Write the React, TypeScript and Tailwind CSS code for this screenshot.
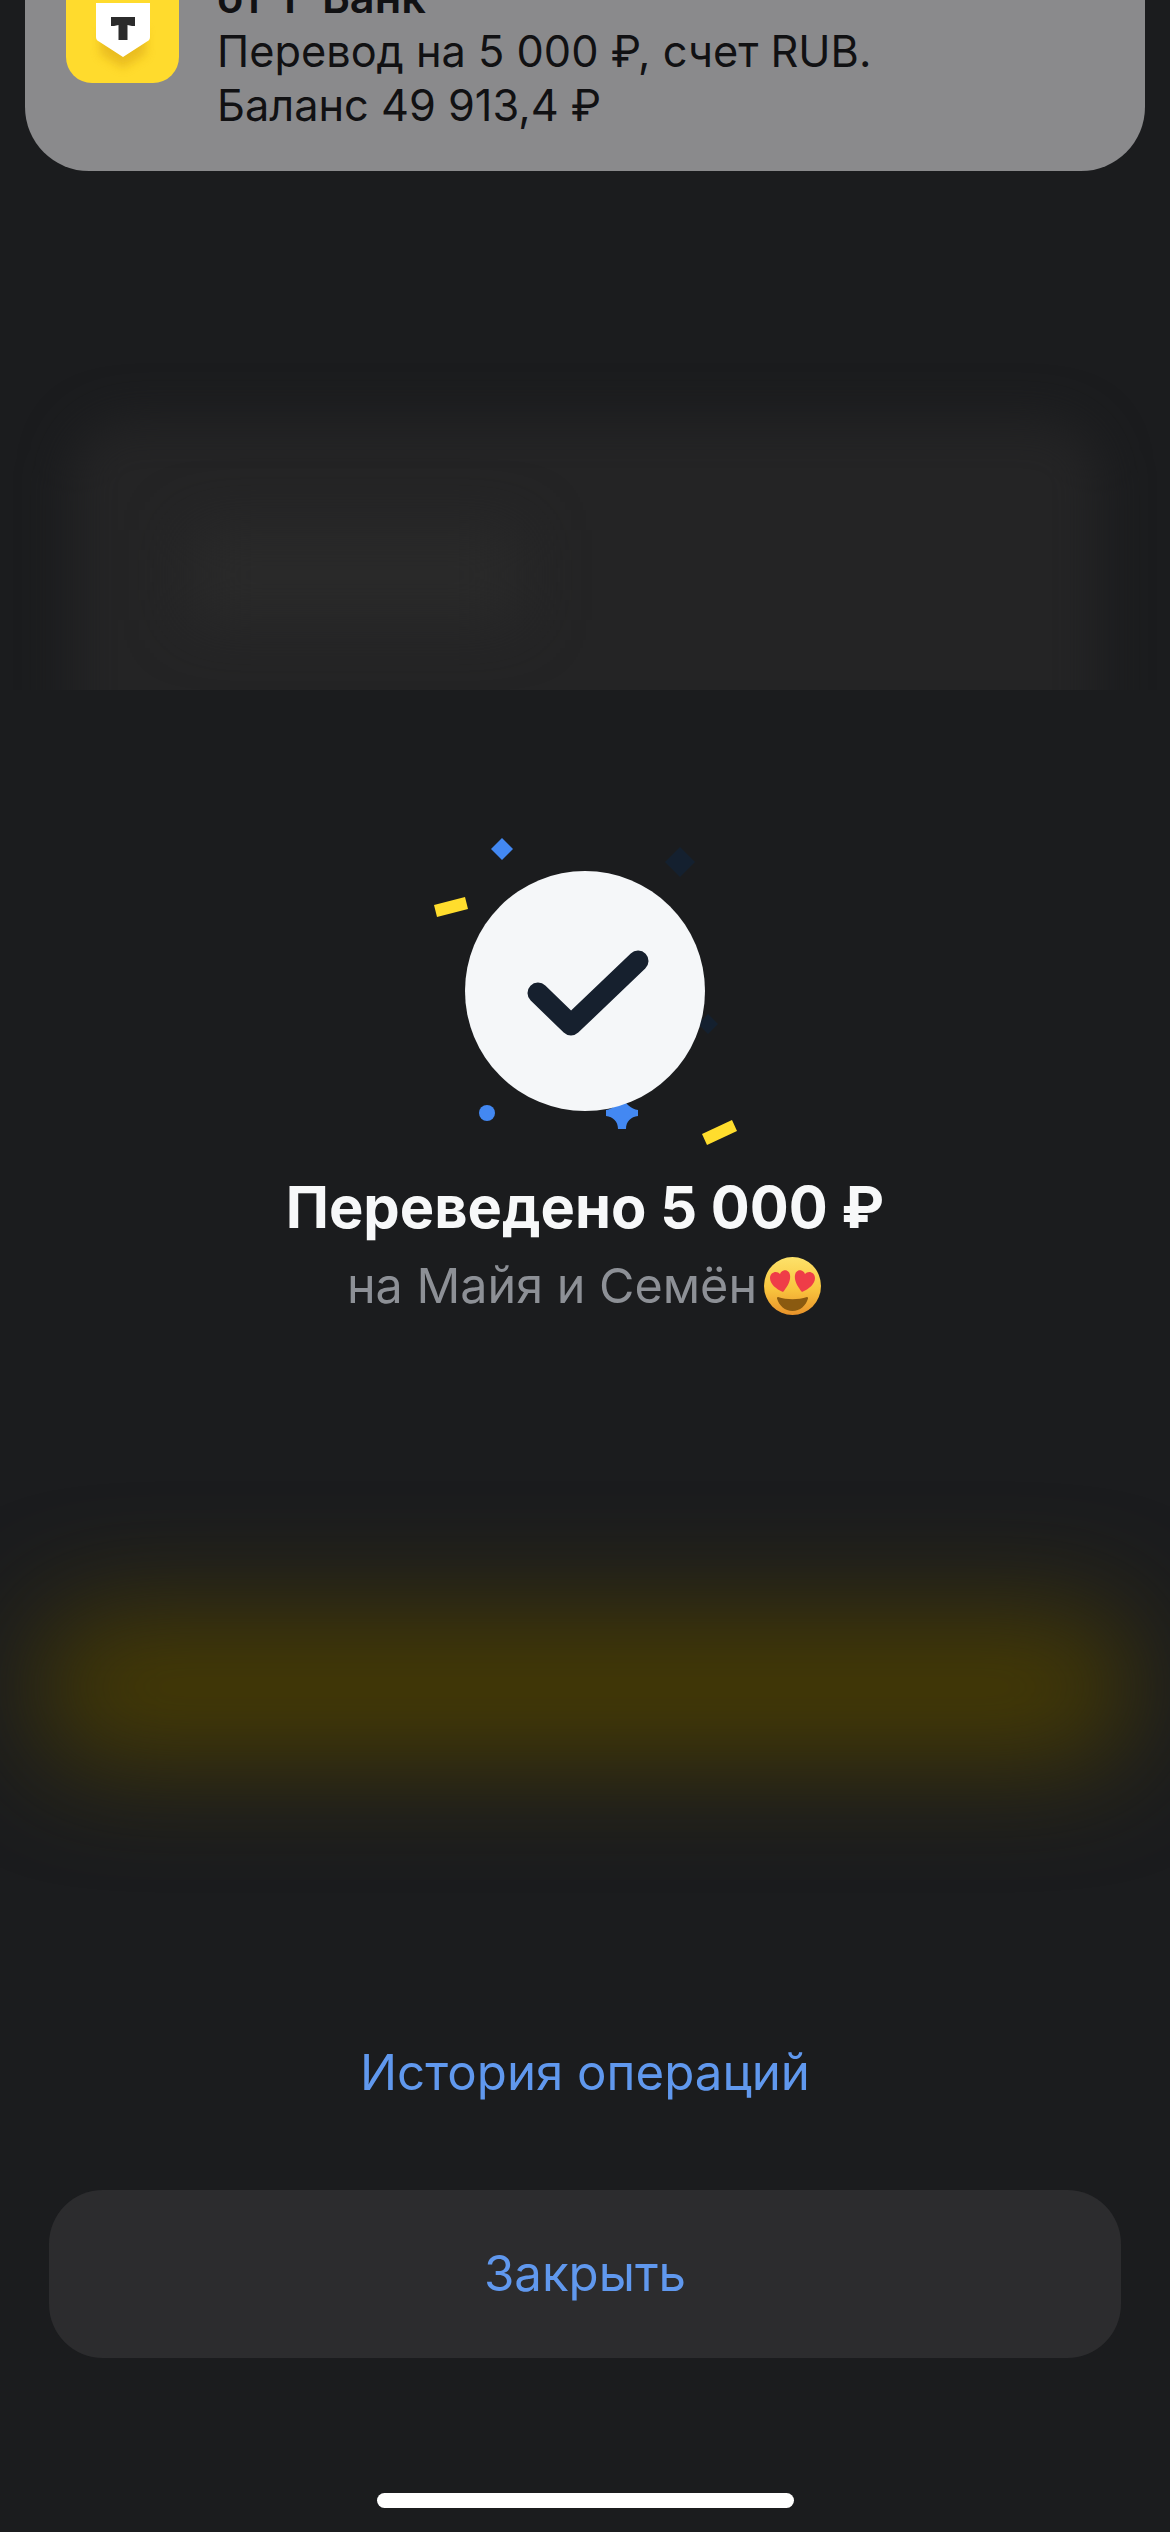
import React from 'react';

const font = { fontFamily: 'Inter, "Liberation Sans", sans-serif' };

function BankIcon() {
  return (
    <div className="relative mb-[49px] h-[113px] w-[113px] shrink-0 overflow-hidden rounded-[26px] bg-[#ffdb2d]">
      <svg viewBox="0 0 113 113" className="h-full w-full">
        <defs>
          <filter id="soft" x="-30%" y="-30%" width="160%" height="160%">
            <feGaussianBlur stdDeviation="5" />
          </filter>
        </defs>
        <path d="M34 60h46v24L57 98 34 84z" fill="#d9a514" opacity="0.55" filter="url(#soft)" />
        <path d="M30 33h54v34c0 2-1 3.500-3 4.500L57 87 33 71.500c-2-1-3-2.500-3-4.500z" fill="#fff" />
        <path d="M45 47h24v9h-3l-4.500-1v15h-9V55l-4.500 1h-3z" fill="#2b2b2b" />
      </svg>
    </div>
  );
}

function SuccessBadge() {
  return (
    <svg viewBox="400 820 370 340" className="mx-auto block h-[340px] w-[370px]">
      <path d="M502 838l11 11-11 11-11-11z" fill="#4388f2" />
      <path d="M680 847l15 15-15 15-15-15z" fill="#14202f" />
      <path d="M708 1014l10 10-10 10-10-10z" fill="#14202f" />
      <path d="M434 905l31-8 3 12-31 8z" fill="#ffdd2d" />
      <path d="M702 1134l30-14 5 11-30 14z" fill="#ffdd2d" />
      <circle cx="487" cy="1113" r="8" fill="#4388f2" />
      <path d="M606 1110c7-1 12-6 16-13 4 7 9 12 16 13v6c-7 1-12 5-12 13h-8c0-8-5-12-12-13z" fill="#4388f2" />
      <circle cx="585" cy="991" r="120" fill="#f5f7f9" />
      <path d="M538 993l33 32 67-64" fill="none" stroke="#16202e" strokeWidth="21" strokeLinecap="round" strokeLinejoin="round" />
    </svg>
  );
}

function HeartEyes() {
  return (
    <svg viewBox="0 0 57 58" className="ml-[7px] h-[58px] w-[57px] shrink-0">
      <defs>
        <linearGradient id="face" x1="0" y1="0" x2="0" y2="1">
          <stop offset="0" stopColor="#fde26a" />
          <stop offset="0.55" stopColor="#f9c53e" />
          <stop offset="1" stopColor="#e8922a" />
        </linearGradient>
      </defs>
      <ellipse cx="28.500" cy="29" rx="28.500" ry="29" fill="url(#face)" />
      <path d="M14 40c9 3 20 3 29 0 1 0 1 1 1 1.500-2 7-8 12.500-15.500 12.500S15 48.500 13 41.500c0-.5 0-1.500 1-1.500z" fill="#8a5a10" />
      <path d="M19 35C12 32 6 27 6 21c0-6 7-8 10-4 2-5 9-5 10 1 1 6-3 12-7 17z" fill="#ef3d48" />
      <path d="M38 35c7-3 13-8 13-14 0-6-7-8-10-4-2-5-9-5-10 1-1 6 3 12 7 17z" fill="#ef3d48" />
    </svg>
  );
}

export default function App() {
  return (
    <div style={font} className="relative h-[2532px] w-[1170px] overflow-hidden bg-[#1b1c1e]">
      {/* размытые пятна за оверлеем */}
      <div className="absolute left-0 top-[360px] h-[330px] w-full overflow-hidden">
        <div className="absolute left-[70px] top-[60px] h-[400px] w-[1030px] rounded-[60px] bg-[#242425] blur-[24px]" />
        <div className="absolute left-[190px] top-[170px] h-[90px] w-[330px] bg-[#2a2a2a] blur-[30px]" />
      </div>
      <div className="absolute left-[40px] top-[1612px] h-[150px] w-[1090px] rounded-[60px] bg-[#463b04] blur-[55px]" />

      <div className="relative flex h-full flex-col">
        <div className="mx-[25px] flex h-[171px] shrink-0 items-end overflow-hidden rounded-b-[64px] bg-[#8a8a8c] pb-[39px] pl-[41px]">
          <BankIcon />
          <div className="ml-[38px] text-[43.300px] leading-[54px] text-[#111113]">
            <div className="font-semibold">от Т-Банк</div>
            <div>Перевод на 5 000 ₽, счет RUB.</div>
            <div>Баланс 49 913,4 ₽</div>
          </div>
        </div>

        <div className="mt-[649px]">
          <SuccessBadge />
        </div>

        <div className="mt-[13px] text-center text-[57.800px] font-bold leading-[68px] text-[#f7f8f9]">Переведено 5 000 ₽</div>
        <div className="mt-[15px] flex items-center justify-center pr-[2px] text-[48.500px] leading-[60px] text-[#8d9096]">
          <span>на Майя и Семён</span>
          <HeartEyes />
        </div>

        <div className="mt-auto text-center text-[49.200px] leading-[60px] text-[#6098ee]">История операций</div>
        <button className="mx-[49px] mt-[88px] flex h-[168px] items-center justify-center rounded-[54px] bg-[#2c2c2e] text-[49.200px] text-[#6098ee]">
          Закрыть
        </button>
        <div className="mx-auto mb-[24px] mt-[135px] h-[15px] w-[417px] rounded-full bg-white" />
      </div>
    </div>
  );
}
